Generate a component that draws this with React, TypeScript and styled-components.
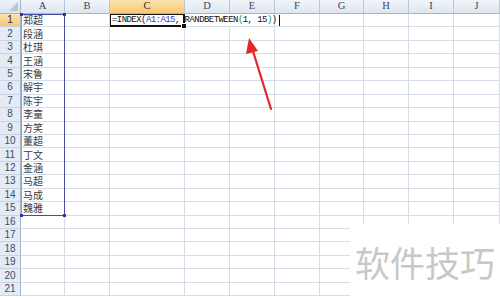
import React from 'react';
import styled, { createGlobalStyle, css } from 'styled-components';

const GlobalStyle = createGlobalStyle`
  html, body {
    margin: 0;
    padding: 0;
    background: #ffffff;
    overflow: hidden;
  }
  body {
    font-family: "Liberation Serif", "Noto Sans CJK SC", serif;
  }
`;

const COLUMNS = ['A', 'B', 'C', 'D', 'E', 'F', 'G', 'H', 'I', 'J'];
const WIDTHS = [44, 45, 75, 45, 45, 45, 44, 45, 45, 46];
const NAMES = [
  '郑超', '段涵', '杜琪', '王涵', '宋鲁', '解宇', '陈宇', '李童',
  '方笑', '董超', '丁文', '金涵', '马超', '马成', '魏雅',
];
const ROW_COUNT = 21;
const ROW_HEIGHT = 13.45;

const Page = styled.div`
  position: relative;
  width: 500px;
  height: 298px;
  overflow: hidden;
  background: #ffffff;
`;

const Grid = styled.div`
  display: grid;
  grid-template-columns: 21px ${WIDTHS.map(w => `${w}px`).join(' ')};
  grid-template-rows: 14px repeat(${ROW_COUNT}, ${ROW_HEIGHT}px);
`;

const Corner = styled.div`
  position: relative;
  box-sizing: border-box;
  background: linear-gradient(#edf1f7, #dce4ef);
  border-right: 1px solid #9eb6ce;
  border-bottom: 1px solid #9eb6ce;

  &::after {
    content: '';
    position: absolute;
    right: 2px;
    bottom: 2px;
    border-left: 9px solid transparent;
    border-bottom: 9px solid #b7c6d9;
  }
`;

const selectedHeader = css`
  background: linear-gradient(#fbe2b0, #f7c972);
  color: #2e2e2e;
`;

const ColHeader = styled.div<{ $selected?: boolean }>`
  box-sizing: border-box;
  display: flex;
  align-items: center;
  justify-content: center;
  font-size: 10.5px;
  line-height: 1;
  color: #3a4556;
  background: linear-gradient(#f1f4f9, #dee6f0);
  border-right: 1px solid #b6c7da;
  border-bottom: 1px solid #9eb6ce;
  ${p => p.$selected && selectedHeader}
`;

const RowHeader = styled.div<{ $selected?: boolean }>`
  box-sizing: border-box;
  display: flex;
  align-items: center;
  justify-content: center;
  font-family: "Liberation Sans", sans-serif;
  font-size: 10px;
  line-height: 1;
  color: #3e4c63;
  background: #e4ebf5;
  border-right: 1px solid #9eb6ce;
  border-bottom: 1px solid #c8d4e3;
  ${p => p.$selected && selectedHeader}
`;

const Cell = styled.div<{ $noRight?: boolean; $active?: boolean }>`
  position: relative;
  box-sizing: border-box;
  display: flex;
  align-items: center;
  padding-left: 2px;
  font-family: "Noto Sans CJK SC", sans-serif;
  font-size: 10px;
  line-height: 10px;
  color: #3c3c3c;
  white-space: nowrap;
  border-right: 1px solid ${p => (p.$noRight ? 'transparent' : '#d6dce6')};
  border-bottom: 1px solid #d6dce6;
  ${p =>
    p.$active &&
    css`
      z-index: 2;
      align-items: flex-start;
      padding-left: 1px;
      border: 1px solid #111111;
      border-width: 1px 2px 2px 1px;
    `}
`;

const FillHandle = styled.span`
  position: absolute;
  right: -4px;
  bottom: -4px;
  width: 4px;
  height: 4px;
  background: #111111;
  border: 1px solid #ffffff;
`;

const Formula = styled.span`
  display: flex;
  align-items: center;
  font-family: "Liberation Mono", monospace;
  font-size: 9px;
  line-height: 11px;
  letter-spacing: -0.56px;
  color: #111111;
  white-space: pre;
`;

const Ref = styled.span`
  color: #3a3ad0;
`;

const Paren = styled.span`
  color: #2f8a4a;
`;

const Caret = styled.span`
  width: 1px;
  height: 11px;
  margin-left: 2px;
  background: #111111;
`;

const RangeBox = styled.div`
  position: absolute;
  left: 21px;
  top: 14px;
  width: 44px;
  height: 202px;
  box-sizing: border-box;
  border: 1px solid #4a4aa8;
  border-left-color: #8f9fd0;
  pointer-events: none;
`;

const RangeDot = styled.span<{ $x: 'left' | 'right'; $y: 'top' | 'bottom' }>`
  position: absolute;
  width: 3px;
  height: 3px;
  background: #3636a0;
  ${p => (p.$x === 'left' ? 'left: -2px;' : 'right: -2px;')}
  ${p => (p.$y === 'top' ? 'top: -2px;' : 'bottom: -2px;')}
`;

const Arrow = styled.svg`
  position: absolute;
  left: 238px;
  top: 30px;
  width: 40px;
  height: 85px;
  overflow: visible;
`;

const Watermark = styled.div`
  position: absolute;
  left: 350px;
  top: 224px;
  width: 150px;
  height: 74px;
  background: #ffffff;
  display: flex;
  align-items: center;
  justify-content: center;
  font-family: "Noto Sans CJK SC", sans-serif;
  font-size: 35px;
  color: #c8c8c8;
`;

const FormulaText = () => (
  <Formula>
    =INDEX(<Ref>A1:A15</Ref>, RANDBETWEEN<Paren>(</Paren>1, 15<Paren>)</Paren>)
    <Caret />
  </Formula>
);

export default function App() {
  const rows = Array.from({ length: ROW_COUNT }, (_, i) => i + 1);

  return (
    <Page>
      <GlobalStyle />
      <Grid>
        <Corner />
        {COLUMNS.map(c => (
          <ColHeader key={c} $selected={c === 'C'}>
            {c}
          </ColHeader>
        ))}
        {rows.map(r => (
          <React.Fragment key={r}>
            <RowHeader $selected={r === 1}>{r}</RowHeader>
            {COLUMNS.map(c => {
              if (r === 1 && c === 'C') {
                return (
                  <Cell key={c} $active>
                    <FormulaText />
                    <FillHandle />
                  </Cell>
                );
              }
              return (
                <Cell key={c} $noRight={r === 1 && c === 'D'}>
                  {c === 'A' && r <= NAMES.length ? NAMES[r - 1] : null}
                </Cell>
              );
            })}
          </React.Fragment>
        ))}
      </Grid>

      <RangeBox>
        <RangeDot $x="left" $y="top" />
        <RangeDot $x="right" $y="top" />
        <RangeDot $x="left" $y="bottom" />
        <RangeDot $x="right" $y="bottom" />
      </RangeBox>

      <Arrow viewBox="0 0 40 85">
        <line x1="33" y1="79" x2="14" y2="18" stroke="#e3262a" strokeWidth="2.2" strokeLinecap="round" />
        <polygon points="11,8 20,21 8,24" fill="#e3262a" />
      </Arrow>

      <Watermark>软件技巧</Watermark>
    </Page>
  );
}
